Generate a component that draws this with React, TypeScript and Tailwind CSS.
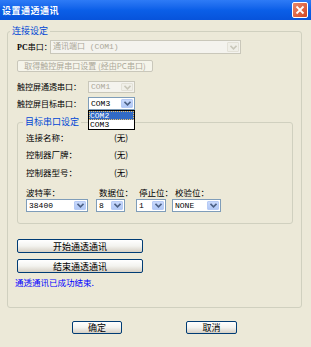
import React from "react";

const F = '"Noto Sans CJK SC", "Noto Sans", sans-serif';

function Chevron({ disabled }: { disabled?: boolean }) {
  return (
    <svg width="7" height="5" viewBox="0 0 7 5">
      <path d="M0.5 0.8 L3.5 3.8 L6.5 0.8" fill="none" stroke={disabled ? "#C9C7BA" : "#4D6185"} strokeWidth="1.6" />
    </svg>
  );
}

function Select({ value, w, h = 13, disabled }: { value: string; w: number; h?: number; disabled?: boolean }) {
  return (
    <div
      className={`flex items-stretch border ${disabled ? "border-[#C9C7BA] bg-[#F4F3EE]" : "border-[#7F9DB9] bg-white"}`}
      style={{ width: w, height: h }}
    >
      <div
        className={`flex-1 flex items-center pl-[2px] text-[8px] leading-none whitespace-nowrap overflow-hidden ${disabled ? "text-[#ACA899]" : "text-black"}`}
        style={{ fontFamily: '"Liberation Mono", "Noto Sans CJK SC", monospace' }}
      >
        {value}
      </div>
      <div
        className={`w-[12px] m-[1px] flex items-center justify-center rounded-[1px] ${
          disabled ? "bg-[#F0EFE8] border border-[#E3E1D7]" : "bg-gradient-to-b from-[#C8D9FC] to-[#B1C8F6] border border-[#B7CBF5]"
        }`}
      >
        <Chevron disabled={disabled} />
      </div>
    </div>
  );
}

function Btn({ children, w, h = 14, disabled }: { children: React.ReactNode; w: number; h?: number; disabled?: boolean }) {
  return (
    <div
      className={`flex items-center justify-center rounded-[2px] border leading-none whitespace-nowrap ${
        disabled
          ? "border-[#C9C7BA] bg-[#F5F4EA] text-[#ACA899] text-[8px]"
          : "border-[#003C74] bg-gradient-to-b from-white via-[#F3F3EF] to-[#D6D0C5] text-black text-[9px]"
      }`}
      style={{ width: w, height: h }}
    >
      {children}
    </div>
  );
}

export default function App() {
  return (
    <div className="w-[311px] h-[347px] bg-[#ECE9D8] overflow-hidden relative" style={{ fontFamily: F }}>
      {/* Title bar */}
      <div className="h-[20px] flex items-center justify-between pl-[2px] pr-[2px] bg-gradient-to-b from-[#2E7BF6] via-[#0B5FE8] to-[#0753DB]">
        <div className="text-white font-bold text-[9px] leading-none tracking-[0.5px]">设置通透通讯</div>
        <div className="w-[16px] h-[16px] rounded-[2px] border border-white bg-gradient-to-br from-[#E9876B] to-[#D2451F] flex items-center justify-center mr-[1px]">
          <svg width="10" height="10" viewBox="0 0 10 10">
            <path d="M1.5 1.5 L8.5 8.5 M8.5 1.5 L1.5 8.5" stroke="white" strokeWidth="1.8" />
          </svg>
        </div>
      </div>

      {/* Outer group */}
      <fieldset className="ml-[7px] mt-[5px] w-[295px] h-[283px] border border-[#D0D0BF] rounded-[3px] pl-[9px] pr-0">
        <legend className="-ml-[7px] px-[2px] text-[9px] leading-[12px] text-[#0046D5]">连接设定</legend>

        <div className="flex items-center h-[14px] mt-[3px]">
          <div className="w-[33px] text-[8px] leading-none text-black whitespace-nowrap">
            <span style={{ fontFamily: '"Liberation Serif", serif' }} className="font-bold">PC</span>串口：
          </div>
          <Select value="通讯端口 (COM1)" w={191} h={14} disabled />
        </div>

        <div className="mt-[6px]">
          <Btn w={136} h={12} disabled>
            取得触控屏串口设置 (经由PC串口)
          </Btn>
        </div>

        <div className="flex items-center h-[12px] mt-[9px]">
          <div className="w-[71px] text-[8px] leading-none whitespace-nowrap">触控屏通透串口：</div>
          <Select value="COM1" w={47} h={12} disabled />
        </div>

        <div className="flex items-center h-[13px] mt-[4px] relative">
          <div className="w-[71px] text-[8px] leading-none whitespace-nowrap">触控屏目标串口：</div>
          <Select value="COM3" w={47} h={13} />
          <div className="absolute left-[71px] top-[13px] w-[47px] h-[20px] bg-white border border-black z-10 flex flex-col text-[8px] leading-none" style={{ fontFamily: '"Liberation Mono", monospace' }}>
            <div className="h-[9px] bg-[#316AC5] text-white flex items-center pl-[1px] outline-1 outline-dotted outline-[#F0C060] -outline-offset-1">COM2</div>
            <div className="h-[9px] flex items-center pl-[1px] text-black">COM3</div>
          </div>
        </div>

        {/* Inner group */}
        <fieldset className="mt-[6px] ml-0 w-[276px] h-[108px] border border-[#D0D0BF] rounded-[3px] pl-[8px]">
          <legend className="-ml-[3px] px-[2px] text-[9px] leading-[12px] text-[#0046D5]">目标串口设定</legend>
          <div className="flex flex-col text-[8.5px] leading-none whitespace-nowrap">
            <div className="flex items-center h-[12px] mt-[3px]">
              <div className="w-[88px]">连接名称：</div>
              <div>(无)</div>
            </div>
            <div className="flex items-center h-[12px] mt-[5px]">
              <div className="w-[88px]">控制器厂牌：</div>
              <div>(无)</div>
            </div>
            <div className="flex items-center h-[12px] mt-[6px]">
              <div className="w-[88px]">控制器型号：</div>
              <div>(无)</div>
            </div>
            <div className="flex items-center h-[12px] mt-[8px]">
              <div className="w-[73px]">波特率：</div>
              <div className="w-[40px]">数据位：</div>
              <div className="w-[36px]">停止位：</div>
              <div>校验位：</div>
            </div>
            <div className="flex items-center mt-[1px]">
              <div className="w-[70px]"><Select value="38400" w={62} /></div>
              <div className="w-[40px]"><Select value="8" w={29} /></div>
              <div className="w-[36px]"><Select value="1" w={30} /></div>
              <div><Select value="NONE" w={49} /></div>
            </div>
          </div>
        </fieldset>

        <div className="mt-[15px]">
          <Btn w={126}>开始通透通讯</Btn>
        </div>
        <div className="mt-[6px]">
          <Btn w={126}>结束通透通讯</Btn>
        </div>
        <div className="mt-[5px] -ml-[2px] text-[8.5px] leading-none text-[#0000FF] whitespace-nowrap">通透通讯已成功结束.</div>
      </fieldset>

      <div className="flex mt-[13px] pl-[72px] gap-[64px]">
        <Btn w={50} h={13}>确定</Btn>
        <Btn w={51} h={13}>取消</Btn>
      </div>
    </div>
  );
}
